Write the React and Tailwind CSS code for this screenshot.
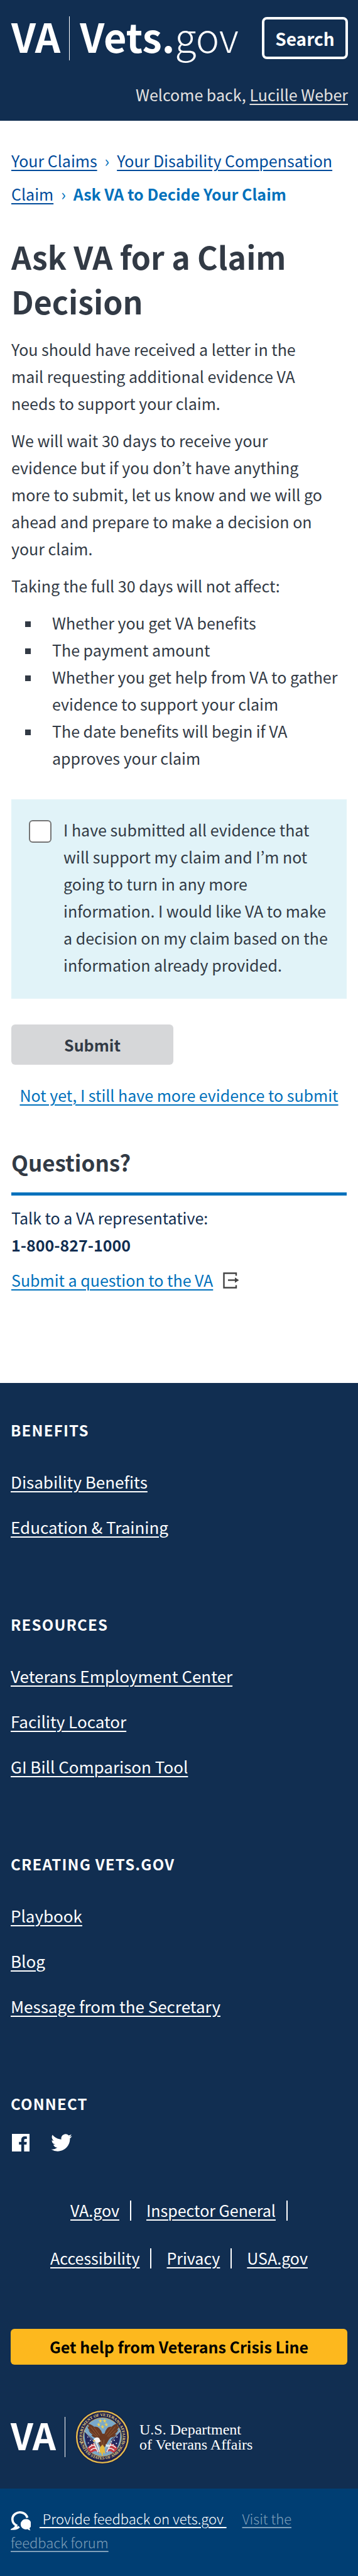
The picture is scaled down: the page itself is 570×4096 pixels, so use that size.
import React from "react";

const link = "underline decoration-2 underline-offset-4";

function SiteHeader() {
  return (
    <header className="bg-[#112e51] pt-[27px] pr-4 pb-5 pl-[18px] text-white">
      <div className="flex h-[67px] items-center justify-between">
        <a href="#home" aria-label="Vets.gov home" className="flex items-center">
          <span className="pb-2 text-[63px] leading-none font-bold">VA</span>
          <span className="ml-3.5 h-[70px] w-px bg-white" />
          <span className="ml-4 pb-2 text-[63px] leading-none">
            <b className="font-bold">Vets.</b>
            <span className="font-light">gov</span>
          </span>
        </a>
        <button
          type="button"
          className="h-full w-[137px] rounded-lg border-4 border-white text-[28px] font-bold"
        >
          Search
        </button>
      </div>
      <p className="mt-[35px] text-right text-[25px] leading-[43px] text-[#e4e2e0]">
        Welcome back,{" "}
        <a href="#profile" className={link}>
          Lucille Weber
        </a>
      </p>
    </header>
  );
}

function Breadcrumbs() {
  return (
    <nav aria-label="Breadcrumb" className="leading-[53px] text-[#0071bc]">
      <a href="#claims" className={`text-[#004b9b] ${link}`}>
        Your Claims
      </a>
      <span className="mx-3">›</span>
      <a href="#claim" className={`text-[#004b9b] ${link}`}>
        Your Disability Compensation Claim
      </a>
      <span className="mx-3">›</span>
      <strong className="font-bold">Ask VA to Decide Your Claim</strong>
    </nav>
  );
}

function ExitIcon() {
  return (
    <svg viewBox="0 0 26 26" className="h-[26px] w-[26px]" fill="none" stroke="#444" strokeWidth="2.4">
      <path d="M21 5.5V1.5H1.5v23H21v-4" />
      <path d="M8 12.5h12" />
      <path d="M19 8.3l6.500 4.200-6.500 4.200z" fill="#444" stroke="none" />
    </svg>
  );
}

function FacebookIcon() {
  return (
    <svg viewBox="0 0 28 28" className="h-7 w-7" fill="currentColor">
      <path d="M0 0h28v28h-8.600V17h3.800l.5-4.200h-4.300v-2.700c0-1.300.4-2.100 2.100-2.100h2.300V4.200c-.4 0-1.800-.2-3.400-.2-3.300 0-5.500 2-5.500 5.700v3.100h-3.700V17h3.700v11H0z" />
    </svg>
  );
}

function TwitterIcon() {
  return (
    <svg viewBox="0 0 24 20" className="h-7 w-[34px]" fill="currentColor">
      <path d="M23.950 2.570a10 10 0 01-2.820.77 4.960 4.960 0 002.160-2.720c-.950.550-2 .950-3.130 1.180a4.920 4.920 0 00-8.380 4.480C7.690 6.090 4.070 4.130 1.640 1.160a4.820 4.820 0 00-.67 2.480c0 1.710.87 3.210 2.190 4.100a4.900 4.900 0 01-2.230-.620v.060a4.920 4.920 0 003.950 4.830 5 5 0 01-2.210.080 4.940 4.940 0 004.600 3.420A9.870 9.870 0 010 17.540a13.990 13.990 0 007.550 2.210c9.050 0 14-7.500 14-13.990 0-.210 0-.420-.020-.630a9.940 9.940 0 002.420-2.560z" />
    </svg>
  );
}

function ChatIcon() {
  return (
    <svg viewBox="0 0 32 32" className="mr-3.5 inline-block h-8 w-8" fill="none">
      <path d="M26.500 11.500A12 11 0 1 0 9 23.500Q8 27 4.500 29Q10 29 13.500 25.500" stroke="#fff" strokeWidth="3.600" />
      <path
        d="M24 13.500a8.200 8.200 0 1 0 0 16.400c1 0 2-.2 2.900-.5 1.300 1.300 3 2 4.600 2-1-1-1.400-2.300-1.400-3.600A8.200 8.200 0 0 0 24 13.500z"
        fill="#fff"
      />
    </svg>
  );
}

function Seal() {
  const star = "M0-4l1 2.800 3 .1-2.400 1.800.9 3L0 2 -1.500 3.700l.5-3L-4-1.100l3-.1z";
  return (
    <svg viewBox="0 0 100 100" role="img" aria-label="Department seal" className="h-[86px] w-[86px]">
      <defs>
        <path id="arcTop" d="M14.500 61A37.500 37.500 0 1 1 85.500 61" />
        <path id="arcBottom" d="M9.500 62A42.500 42.500 0 0 0 90.500 62" />
      </defs>
      <circle cx="50" cy="50" r="50" fill="#1d1a3d" />
      <circle cx="50" cy="50" r="47.500" fill="#1c2150" stroke="#e3bd4d" strokeWidth="2.800" />
      <circle cx="50" cy="50" r="35.500" fill="#79a9cb" stroke="#d8b04a" strokeWidth="1" />
      <text fill="#ecd27a" fontSize="7.500" fontWeight="700" fontFamily="Liberation Serif, serif">
        <textPath href="#arcTop" startOffset="50%" textAnchor="middle">
          DEPARTMENT OF VETERANS AFFAIRS
        </textPath>
      </text>
      <text fill="#ecd27a" fontSize="7.500" fontWeight="700" fontFamily="Liberation Serif, serif">
        <textPath href="#arcBottom" startOffset="50%" textAnchor="middle">
          UNITED STATES OF AMERICA
        </textPath>
      </text>
      <circle cx="8.500" cy="59" r="1" fill="#ecd27a" />
      <circle cx="91.500" cy="59" r="1" fill="#ecd27a" />
      <path d="M17 40l16 14 5 14-14 4q-8-14-7-32z" fill="#23285e" />
      <path d="M83 40L67 54l-5 14 14 4q8-14 7-32z" fill="#23285e" />
      <path d="M16 38l30 34M84 38L54 72" stroke="#d9d3b0" strokeWidth="1" />
      <path d="M22 70q8-9 14-8l8 18q-6-7-12-2-6 3-10-8z" fill="#c33a44" />
      <path d="M78 70q-8-9-14-8l-8 18q6-7 12-2 6 3 10-8z" fill="#c33a44" />
      <path
        d="M25 70q6-6 11-4M28 75q6-6 11-3M75 70q-6-6-11-4M72 75q-6-6-11-3M34 61l8 17M38 58l7 20M66 61l-8 17"
        stroke="#f3f0ec"
        strokeWidth="1.800"
        fill="none"
      />
      <g fill="#e8eaf2">
        <circle cx="23" cy="50" r="1" />
        <circle cx="28" cy="56" r="1" />
        <circle cx="24" cy="61" r="1" />
        <circle cx="30" cy="64" r="1" />
        <circle cx="77" cy="50" r="1.200" />
        <circle cx="72" cy="56" r="1.200" />
        <circle cx="76" cy="62" r="1.200" />
        <circle cx="70" cy="64" r="1.200" />
        <circle cx="67" cy="59" r="1.200" />
      </g>
      <path
        d="M50 44Q45 29 35 31Q27 25 22 26q3 3 3 5-2 0-3-1 1 5 5 8-2 0-3-1 3 6 8 9-2 1-3 0 4 5 10 6l5 12 6 11 7-11q6-12 9-13 7-1 10-6-2 0-3 0 5-4 7-9-2 1-3 1 4-4 4-8-2 2-3 1 1-3 2-5-7 0-13 6-9-2-13 13z"
        fill="#6b3a22"
      />
      <path
        d="M28 31l14 18M34 32l11 15M26 38l13 11M74 31L59 49M67 32L56 46M75 38L61 50M48 56l2 12M53 55l-1 13"
        stroke="#93603b"
        strokeWidth="1.100"
        fill="none"
      />
      <g fill="#f0cf4e">
        <path transform="translate(46 20)" d={star} />
        <path transform="translate(54 20)" d={star} />
        <path transform="translate(43 27)" d={star} />
        <path transform="translate(57 27)" d={star} />
        <path transform="translate(50 31)" d={star} />
      </g>
      <path d="M35 53q4-4 9-1l3 6-6 3-4-3-4 1q0-4 2-6z" fill="#f4f3f0" />
      <path d="M37 57l-4 2 1-4z" fill="#e0b030" />
      <path d="M46 69l4-5 4 5 1 13-3-4-2 8-3-8-3 4z" fill="#e7bb3e" />
      <path d="M56 63q7 3 11 0-2 6-10 5z" fill="#dce9f2" />
    </svg>
  );
}

function FooterSection({ title, links }) {
  return (
    <section className="mb-[116px]">
      <h3 className="text-[24px] leading-9 font-bold tracking-wider uppercase">{title}</h3>
      <ul className="mt-[42px] flex flex-col gap-[29px]">
        {links.map((text) => (
          <li key={text} className="text-[26px] leading-[43px]">
            <a href="#footer" className={link}>
              {text}
            </a>
          </li>
        ))}
      </ul>
    </section>
  );
}

function InlineLinks({ items, trailing }) {
  return (
    <ul className="flex justify-center">
      {items.map((text, i) => (
        <li key={text} className="flex items-center">
          <a href="#footer" className={link}>
            {text}
          </a>
          {(trailing || i < items.length - 1) && (
            <span className={`ml-[17px] h-8 w-0.5 bg-white ${i < items.length - 1 ? "mr-6" : ""}`} />
          )}
        </li>
      ))}
    </ul>
  );
}

function SiteFooter() {
  return (
    <footer className="bg-[#112e51] text-white">
      <div className="px-[17px] pt-[57px] pb-[39px]">
        <FooterSection title="Benefits" links={["Disability Benefits", "Education & Training"]} />
        <FooterSection
          title="Resources"
          links={["Veterans Employment Center", "Facility Locator", "GI Bill Comparison Tool"]}
        />
        <FooterSection title="Creating Vets.gov" links={["Playbook", "Blog", "Message from the Secretary"]} />
        <section>
          <h3 className="text-[24px] leading-9 font-bold tracking-wider uppercase">Connect</h3>
          <div className="mt-[30px] flex items-center gap-[34px] pl-0.5">
            <a href="#facebook" aria-label="Facebook">
              <FacebookIcon />
            </a>
            <a href="#twitter" aria-label="Twitter">
              <TwitterIcon />
            </a>
          </div>
        </section>
        <div className="mt-[72px] flex flex-col gap-[33px] text-[25px] leading-[43px]">
          <InlineLinks items={["VA.gov", "Inspector General"]} trailing />
          <InlineLinks items={["Accessibility", "Privacy", "USA.gov"]} />
        </div>
        <button
          type="button"
          className="mt-[91px] h-[57px] w-full rounded-md bg-[#fdb81e] text-[25px] font-bold text-black"
        >
          Get help from Veterans Crisis Line
        </button>
        <div className="mt-[72px] flex items-center">
          <span className="pb-2 text-[58px] leading-none font-bold">VA</span>
          <span className="ml-3.5 h-16 w-px bg-white" />
          <span className="ml-4">
            <Seal />
          </span>
          <span className="ml-4 font-['Liberation_Serif',serif] text-[24px] leading-6">
            U.S. Department
            <br />
            of Veterans Affairs
          </span>
        </div>
      </div>
      <div className="bg-[#003e73] px-[17px] pt-[29px] pb-[35px] text-[22px] leading-[37px] font-light">
        <ChatIcon />
        <a href="#feedback" className={`whitespace-pre ${link}`}>
          {" Provide feedback on vets.gov "}
        </a>{" "}
        <a href="#forum" className={`ml-5 text-[#7f9fb9] ${link}`}>
          Visit the <br />
          feedback forum
        </a>
      </div>
    </footer>
  );
}

export default function App() {
  return (
    <div className="min-h-screen bg-white font-['Noto_Sans_CJK_KR','Noto_Sans',sans-serif] text-[#323a45]">
      <SiteHeader />
      <main className="px-[18px] pt-[37px] pb-[142px] text-[25px] leading-[43px]">
        <Breadcrumbs />
        <h1 className="mt-[37px] text-[50px] leading-[71px] font-bold">Ask VA for a Claim Decision</h1>
        <div className="mt-5 flex flex-col gap-4">
          <p className="pr-[30px]">
            You should have received a letter in the mail requesting additional evidence VA needs to support your claim.
          </p>
          <p className="pr-[30px]">
            We will wait 30 days to receive your evidence but if you don’t have anything more to submit, let us know
            and we will go ahead and prepare to make a decision on your claim.
          </p>
          <p>Taking the full 30 days will not affect:</p>
          <ul>
            {[
              "Whether you get VA benefits",
              "The payment amount",
              "Whether you get help from VA to gather evidence to support your claim",
              "The date benefits will begin if VA approves your claim",
            ].map((text) => (
              <li key={text} className="flex pl-[22px]">
                <span className="mt-[19px] mr-[34px] h-[9px] w-[9px] shrink-0 bg-[#323a45]" />
                {text}
              </li>
            ))}
          </ul>
        </div>
        <form>
          <div className="mt-11 flex items-start gap-[19px] bg-[#e1f3f8] pt-[27px] pr-6 pb-8 pl-7">
            <input
              id="confirm"
              type="checkbox"
              className="mt-1.5 h-9 w-9 shrink-0 appearance-none rounded-md border-2 border-[#757575] bg-white"
            />
            <label htmlFor="confirm">
              I have submitted all evidence that will support my claim and I’m not going to turn in any more
              information. I would like VA to make a decision on my claim based on the information already provided.
            </label>
          </div>
          <button type="button" className="mt-[41px] block h-16 w-[258px] rounded-md bg-[#d6d7d9] font-bold">
            Submit
          </button>
        </form>
        <p className="mt-[27px] text-center">
          <a href="#later" className={`text-[#0071bc] ${link}`}>
            Not yet, I still have more evidence to submit
          </a>
        </p>
        <h2 className="mt-[60px] border-b-[5px] border-[#0071bc] pb-[23px] text-[35px] leading-[50px] font-bold">
          Questions?
        </h2>
        <div className="mt-3.5 text-[#112e51]">
          <p>Talk to a VA representative:</p>
          <p className="font-bold">1-800-827-1000</p>
        </div>
        <p className="mt-[13px] flex items-center gap-4">
          <a href="#question" className={`text-[#0071bc] ${link}`}>
            Submit a question to the VA
          </a>
          <ExitIcon />
        </p>
      </main>
      <SiteFooter />
    </div>
  );
}
